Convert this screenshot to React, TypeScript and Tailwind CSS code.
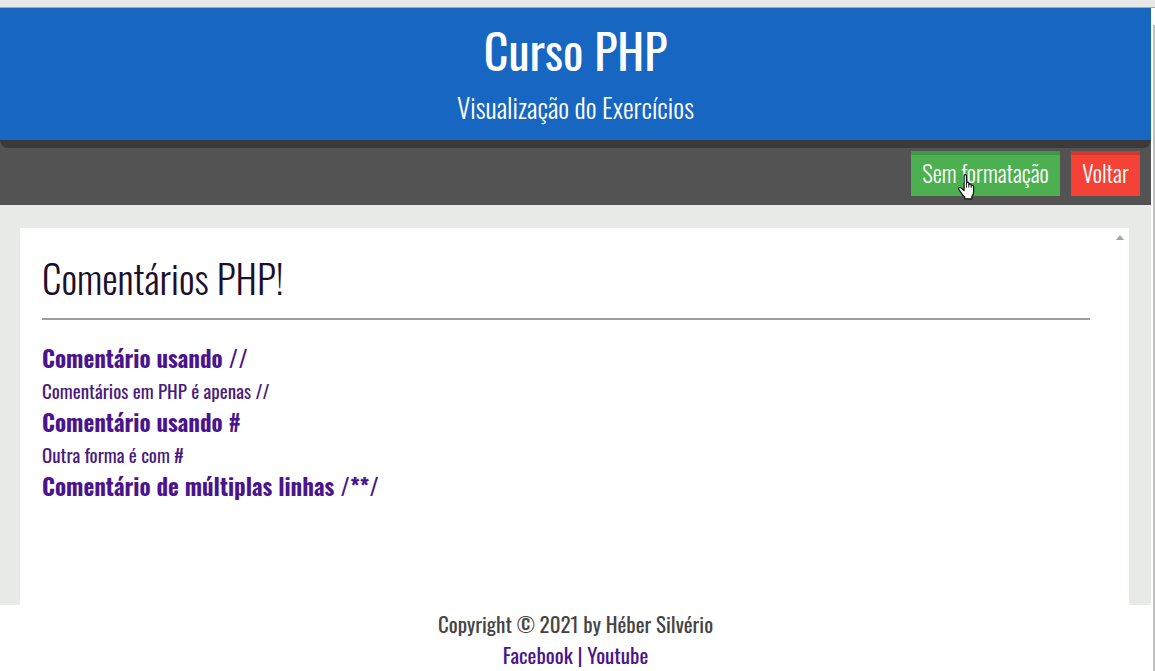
const font = "font-['Oswald','Open_Sans',sans-serif]";

function HandCursor() {
  return (
    <svg
      viewBox="0 0 16 22"
      className="pointer-events-none absolute top-[19px] left-[46px] h-[26px] w-[19px]"
    >
      <path
        d="M6 1.5Q6 .5 7 .5Q8 .5 8 1.5V7.5Q8.2 7 9 7Q10 7 10 8V8.8Q10.3 8.3 11 8.3Q12 8.3 12 9.3V10Q12.3 9.5 13 9.5Q14 9.5 14 10.5V15Q14 17.5 12.5 19V21H6.5V19.5Q5 18.5 3.5 16L1.5 13Q1 12 2 11.5Q3 11.2 4 12.3L6 14Z"
        fill="#fff"
        stroke="#111"
        strokeWidth="1"
        strokeLinejoin="round"
      />
      <path d="M8 7.5V11.5M10 8.5V11.5M12 9.5V11.5" stroke="#111" strokeWidth="0.8" />
    </svg>
  );
}

function Header() {
  return (
    <header className="flex h-[132px] flex-col items-center bg-[#1766c2] pt-[14px] text-white">
      <h1 className="text-[48px] leading-[56px] font-normal">Curso PHP</h1>
      <p className="mt-[14px] text-[27px] leading-[30px] font-light">
        Visualização do Exercícios
      </p>
    </header>
  );
}

function Toolbar() {
  return (
    <div className="h-[65px] bg-[#535353]">
      <div className="h-[8px] rounded-b-[24px] bg-[#3a3a3a]" />
      <div className="mt-[3px] flex justify-end gap-[11px] pr-[11px]">
        <button
          type="button"
          className="relative h-[45px] w-[149px] border-t-4 border-[#3f9945] bg-[#4caf50] pb-[4px] text-[23px] font-light text-white"
        >
          Sem formatação
          <HandCursor />
        </button>
        <button
          type="button"
          className="h-[45px] w-[69px] border-t-4 border-[#d2392f] bg-[#f44336] pb-[4px] text-[23px] font-light text-white"
        >
          Voltar
        </button>
      </div>
    </div>
  );
}

function Section({ title, text }: { title: string; text?: string }) {
  return (
    <>
      <h3 className="text-[23px] leading-[32px] font-bold text-[#4a148c]">{title}</h3>
      {text && <p className="text-[19px] leading-[32px] font-normal text-[#4a1a80]">{text}</p>}
    </>
  );
}

export default function App() {
  return (
    <div className={`flex h-[671px] flex-col overflow-hidden bg-white ${font}`}>
      <div className="h-[8px] shrink-0 border-b border-[#a9a9a9] bg-[#e9e9e7]" />
      <div className="flex flex-1">
        <div className="flex w-[1151px] flex-col">
          <Header />
          <Toolbar />
          <div className="h-[400px] bg-[#e8eae8] pt-[23px] pl-[20px] pr-[22px]">
            <div className="relative h-full bg-white pt-[25px] pl-[22px] pr-[39px]">
              <div className="absolute top-[7px] right-[5px] h-0 w-0 border-x-[4px] border-b-[5px] border-x-transparent border-b-[#a3a3a3]" />
              <h2 className="text-[39px] leading-[48px] font-light text-[#1c0f2e]">
                Comentários PHP!
              </h2>
              <hr className="mt-[17px] mb-[22px] border-t-2 border-[#9e9e9e]" />
              <Section title="Comentário usando //" text="Comentários em PHP é apenas //" />
              <Section title="Comentário usando #" text="Outra forma é com #" />
              <Section title="Comentário de múltiplas linhas /**/" />
            </div>
          </div>
          <footer className="flex flex-col items-center pt-[4px]">
            <p className="text-[21px] leading-[30px] font-normal text-[#444]">
              Copyright © 2021 by Héber Silvério
            </p>
            <p className="mt-px text-[21px] leading-[30px] font-normal text-[#4a148c]">
              <a href="#">Facebook</a> | <a href="#">Youtube</a>
            </p>
          </footer>
        </div>
        <div className="w-[4px] bg-white pt-[17px] pl-[2px]">
          <div className="h-full bg-[#c1c1c1]" />
        </div>
      </div>
    </div>
  );
}
